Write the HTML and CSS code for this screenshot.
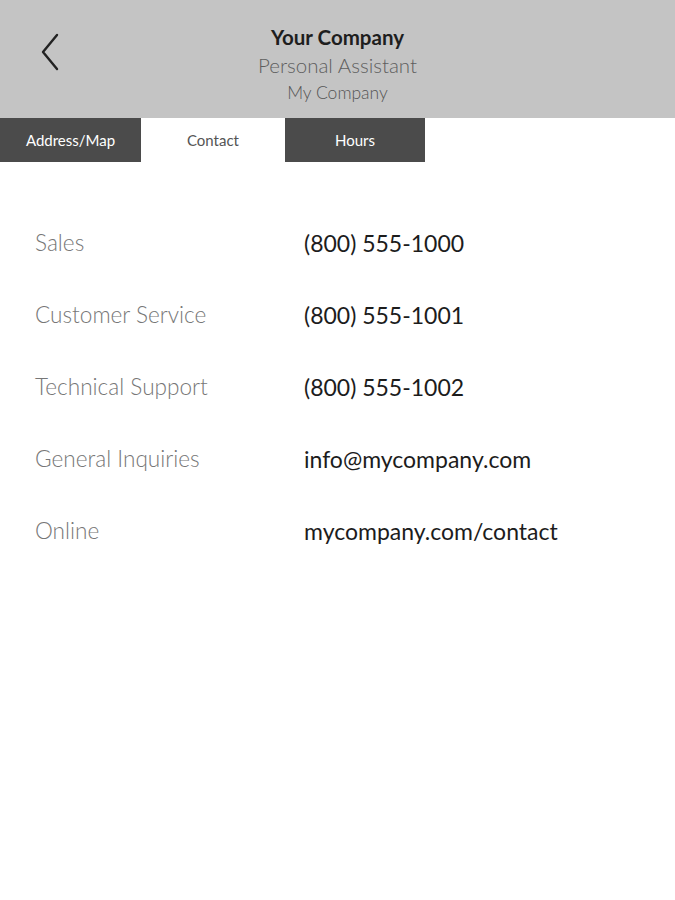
FILE: index.html
```html
<!DOCTYPE html>
<html>
<head>
<meta charset="utf-8">
<link rel="stylesheet" href="styles.css">
</head>
<body>
<header class="header">
  <button class="back" aria-label="Back">
    <svg width="20" height="38" viewBox="0 0 20 38"><polyline points="17,2 3,19 17,36" fill="none" stroke="#222" stroke-width="2.4" stroke-linecap="round" stroke-linejoin="round"/></svg>
  </button>
  <div class="titles">
    <div class="title">Your Company</div>
    <div class="subtitle">Personal Assistant</div>
    <div class="company">My Company</div>
  </div>
</header>
<nav class="tabs">
  <div class="tab">Address/Map</div>
  <div class="tab active">Contact</div>
  <div class="tab">Hours</div>
</nav>
<main class="list">
  <div class="row"><div class="label">Sales</div><div class="value">(800) 555-1000</div></div>
  <div class="row"><div class="label">Customer Service</div><div class="value">(800) 555-1001</div></div>
  <div class="row"><div class="label">Technical Support</div><div class="value">(800) 555-1002</div></div>
  <div class="row"><div class="label">General Inquiries</div><div class="value">info@mycompany.com</div></div>
  <div class="row"><div class="label">Online</div><div class="value">mycompany.com/contact</div></div>
</main>
</body>
</html>
```
FILE: styles.css
```css
* { box-sizing: border-box; }
html, body { margin: 0; padding: 0; background: #fff; }
body { font-family: Lato, "Open Sans", sans-serif; width: 675px; height: 900px; overflow: hidden; }
.header {
  height: 118px;
  background: #c4c4c4;
  position: relative;
  display: flex;
  justify-content: center;
}
.back {
  position: absolute;
  left: 38px;
  top: 33px;
  background: none;
  border: 0;
  padding: 0;
  width: 24px;
  height: 40px;
}
.titles { text-align: center; padding-top: 24px; }
.title { font-size: 20.5px; font-weight: 700; color: #1e1e1e; line-height: 27px; }
.subtitle { font-size: 20.5px; font-weight: 300; color: #5e5e5e; line-height: 27px; margin-top: 1px; }
.company { font-size: 17.5px; font-weight: 300; color: #555; line-height: 22px; margin-top: 3px; }
.tabs { display: flex; height: 44px; }
.tab {
  width: 140px;
  background: #4b4b4b;
  color: #fff;
  font-size: 15px;
  display: flex;
  align-items: center;
  justify-content: center;
}
.tab:first-child { width: 141px; }
.tab.active { background: #fff; color: #555; width: 144px; }
.list { padding: 66px 0 0 35px; }
.row { display: flex; height: 72px; align-items: flex-start; }
.label { width: 269px; font-size: 22.6px; font-weight: 300; color: #777; line-height: 30px; }
.value { font-size: 23px; font-weight: 400; color: #1c1c1c; line-height: 30px; }
```
